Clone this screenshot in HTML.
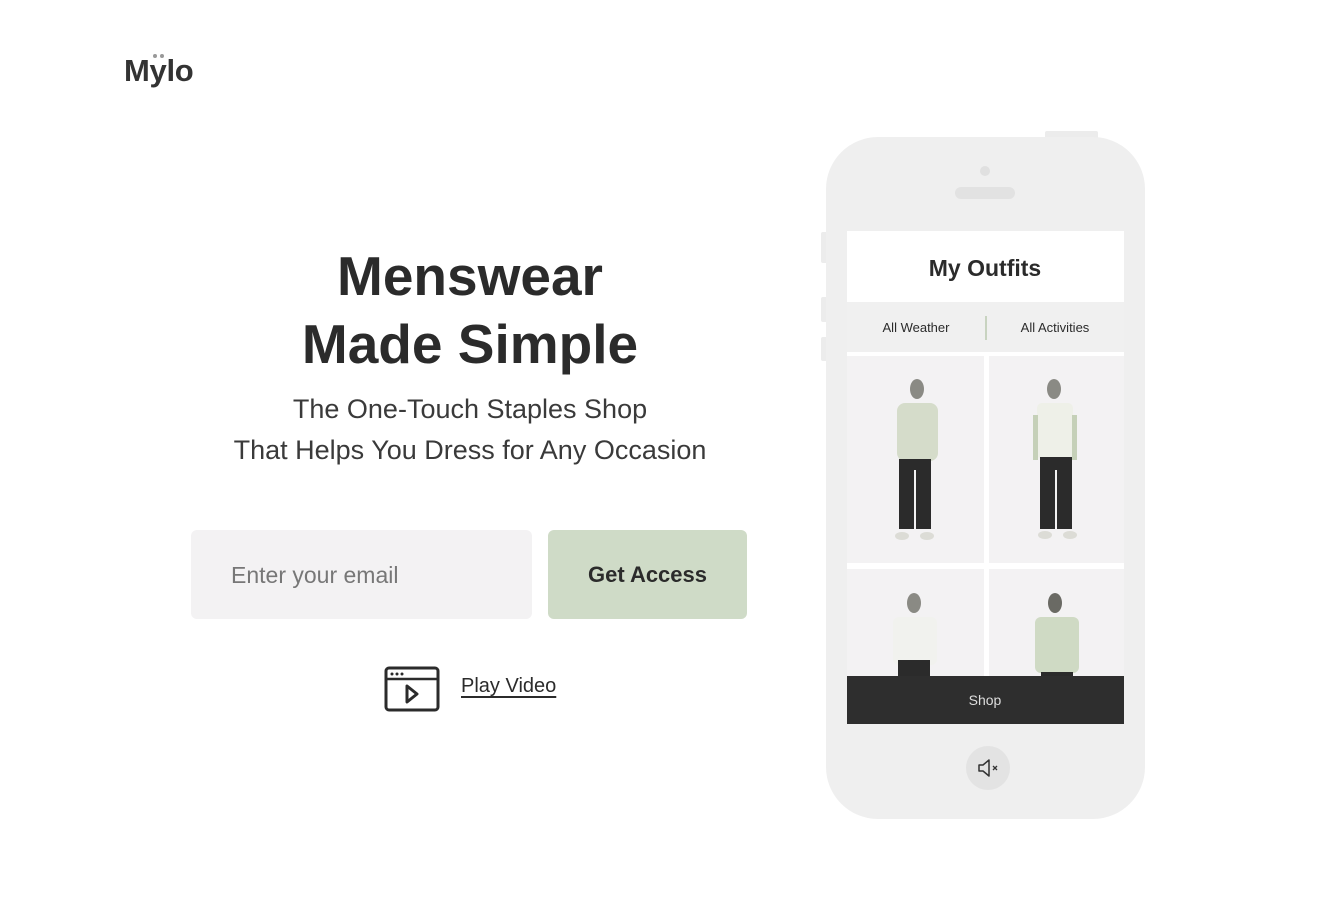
<!DOCTYPE html>
<html><head><meta charset="utf-8"><style>
body{margin:0;width:1329px;height:904px;background:#fff;position:relative;overflow:hidden;font-family:"Liberation Sans",sans-serif;color:#2b2b2b}
.a{position:absolute}
h1{position:absolute;left:170px;width:600px;top:242px;margin:0;text-align:center;font-size:55px;font-weight:bold;line-height:68px;color:#2b2b2b}
.sub{left:120px;width:700px;top:389px;text-align:center;font-size:27px;line-height:41px;color:#3a3a3a}
</style></head><body>
<div class="a" style="left:124px;top:53px;font-size:31px;font-weight:bold;color:#333;letter-spacing:-0.3px">Mylo</div>
<div class="a" style="left:153px;top:54px;width:14px;height:5px"><span class="a" style="left:0;top:0;width:4px;height:4px;border-radius:50%;background:#999"></span><span class="a" style="left:7px;top:0;width:4px;height:4px;border-radius:50%;background:#999"></span></div>
<h1>Menswear<br>Made Simple</h1>
<div class="a sub">The One-Touch Staples Shop<br>That Helps You Dress for Any Occasion</div>
<div class="a" style="left:191px;top:530px;width:341px;height:89px;background:#f3f2f3;border-radius:6px"></div>
<div class="a" style="left:231px;top:562px;font-size:23px;color:#777">Enter your email</div>
<div class="a" style="left:548px;top:530px;width:199px;height:89px;background:#cfdbc7;border-radius:6px;text-align:center;line-height:89px;font-size:22px;font-weight:bold;color:#2b2b2b">Get Access</div>
<svg class="a" style="left:384px;top:666px" width="56" height="46"><rect x="2" y="2" width="52" height="42" rx="3" fill="none" stroke="#2b2b2b" stroke-width="3"/><line x1="2" y1="13" x2="54" y2="13" stroke="#2b2b2b" stroke-width="2.5"/><circle cx="8" cy="8" r="1.5" fill="#2b2b2b"/><circle cx="13" cy="8" r="1.5" fill="#2b2b2b"/><circle cx="18" cy="8" r="1.5" fill="#2b2b2b"/><path d="M23 20 L33 28 L23 36 Z" fill="none" stroke="#2b2b2b" stroke-width="3" stroke-linejoin="round"/></svg>
<div class="a" style="left:461px;top:675px;font-size:20px;color:#2b2b2b;text-decoration:underline;text-underline-offset:4px">Play Video</div>

<svg class="a" style="left:0;top:0" width="1329" height="904">
<rect x="1045" y="131" width="53" height="8" rx="2" fill="#ececec"/>
<rect x="821" y="232" width="8" height="31" rx="2" fill="#ececec"/>
<rect x="821" y="297" width="8" height="25" rx="2" fill="#ececec"/>
<rect x="821" y="337" width="8" height="24" rx="2" fill="#ececec"/>
<rect x="826" y="137" width="319" height="682" rx="52" fill="#efefef"/>
<circle cx="985" cy="171" r="5" fill="#e0e0e0"/>
<rect x="955" y="187" width="60" height="12" rx="6" fill="#e2e2e2"/>
<rect x="847" y="231" width="277" height="493" fill="#fff"/>
<rect x="847" y="302" width="277" height="50" fill="#f0f0f0"/>
<line x1="986" y1="316" x2="986" y2="340" stroke="#c8d3c0" stroke-width="2"/>
<rect x="847" y="356" width="137" height="207" fill="#f3f2f3"/>
<rect x="989" y="356" width="135" height="207" fill="#f3f2f3"/>
<rect x="847" y="569" width="137" height="155" fill="#f3f2f3"/>
<rect x="989" y="569" width="135" height="155" fill="#f3f2f3"/>
<g>
<ellipse cx="917" cy="389" rx="7" ry="10" fill="#8a8a84"/>
<rect x="897" y="403" width="41" height="58" rx="8" fill="#d5dcca"/>
<rect x="899" y="459" width="32" height="70" fill="#2b2b2b"/>
<rect x="914" y="470" width="2" height="60" fill="#f3f2f3"/>
<ellipse cx="902" cy="536" rx="7" ry="4" fill="#dcdcd6"/><ellipse cx="927" cy="536" rx="7" ry="4" fill="#dcdcd6"/>
</g>
<g>
<ellipse cx="1054" cy="389" rx="7" ry="10" fill="#8a8a84"/>
<rect x="1037" y="403" width="36" height="56" rx="5" fill="#eef0e8"/>
<rect x="1033" y="415" width="5" height="45" fill="#c5d0b8"/><rect x="1072" y="415" width="5" height="45" fill="#c5d0b8"/>
<rect x="1040" y="457" width="32" height="72" fill="#2b2b2b"/>
<rect x="1055" y="470" width="2" height="60" fill="#f3f2f3"/>
<ellipse cx="1045" cy="535" rx="7" ry="4" fill="#dcdcd6"/><ellipse cx="1070" cy="535" rx="7" ry="4" fill="#dcdcd6"/>
</g>
<g>
<ellipse cx="914" cy="603" rx="7" ry="10" fill="#8a8a84"/>
<rect x="893" y="617" width="44" height="48" rx="6" fill="#f1f2ee"/>
<rect x="898" y="660" width="32" height="64" fill="#2b2b2b"/>
</g>
<g>
<ellipse cx="1055" cy="603" rx="7" ry="10" fill="#6a6a64"/>
<rect x="1035" y="617" width="44" height="56" rx="6" fill="#cfdac4"/>
<rect x="1041" y="672" width="32" height="52" fill="#2b2b2b"/>
</g>
<rect x="847" y="676" width="277" height="48" fill="#2e2e2e"/>
<text x="985" y="705" text-anchor="middle" font-family="Liberation Sans" font-size="14" fill="#ddd">Shop</text>
<circle cx="988" cy="768" r="22" fill="#e3e3e3"/>
<path d="M979 765 h4 l6 -5 v16 l-6 -5 h-4 z" fill="none" stroke="#333" stroke-width="1.5" stroke-linejoin="round"/>
<path d="M993 766 l4 4 M997 766 l-4 4" stroke="#333" stroke-width="1.3"/>
<text x="985" y="276" text-anchor="middle" font-family="Liberation Sans" font-size="23" font-weight="bold" fill="#2b2b2b">My Outfits</text>
<text x="916" y="332" text-anchor="middle" font-family="Liberation Sans" font-size="13" fill="#2b2b2b">All Weather</text>
<text x="1055" y="332" text-anchor="middle" font-family="Liberation Sans" font-size="13" fill="#2b2b2b">All Activities</text>
</svg>
</body></html>
